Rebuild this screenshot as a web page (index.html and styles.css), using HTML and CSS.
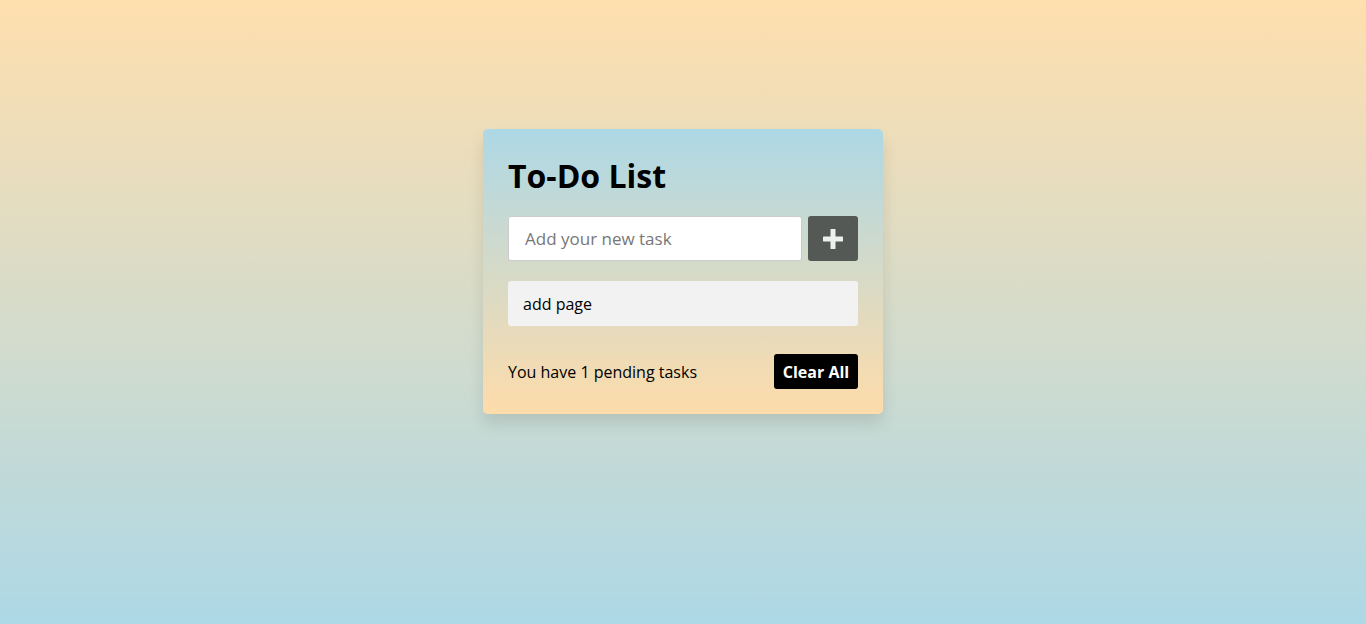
FILE: index.html
```html
<!DOCTYPE html>
<html lang="en">
<head>
<meta charset="utf-8">
<title>To-Do List</title>
<link rel="stylesheet" href="styles.css">
</head>
<body>
  <div class="wrapper">
    <h1 class="title">To-Do List</h1>
    <div class="input-row">
      <input class="task-input" type="text" placeholder="Add your new task">
      <button class="add-btn" aria-label="Add">
        <svg width="20" height="20" viewBox="0 0 20 20"><path d="M10 1v18M1 10h18" stroke="#eef0ee" stroke-width="5" stroke-linecap="round"/></svg>
      </button>
    </div>
    <ul class="todo-list">
      <li class="todo-item">add page</li>
    </ul>
    <div class="footer">
      <span class="pending">You have 1 pending tasks</span>
      <button class="clear-btn">Clear All</button>
    </div>
  </div>
</body>
</html>
```
FILE: styles.css
```css
* { box-sizing: border-box; }
html, body { height: 100%; }
body {
  margin: 0;
  font-family: "Comic Sans MS", "Open Sans", sans-serif;
  background: linear-gradient(to bottom, #ffdfae 0%, #add8e6 100%);
  padding-top: 129px;
}
.wrapper {
  width: 400px;
  margin: 0 auto;
  padding: 25px;
  border-radius: 5px;
  background: linear-gradient(to bottom, #add8e6 0%, #fedcaa 100%);
  box-shadow: 0 10px 15px rgba(0, 0, 0, 0.1);
}
.title {
  margin: 0 0 18px;
  font-size: 32px;
  line-height: 44px;
  font-weight: 700;
  color: #000;
}
.input-row {
  display: flex;
  gap: 6px;
  height: 45px;
}
.task-input {
  flex: 1;
  height: 45px;
  border: 1px solid #ccc;
  border-radius: 3px;
  padding: 0 16px;
  font-family: inherit;
  font-size: 17px;
  outline: none;
  background: #fff;
}
.task-input::placeholder { color: #777; }
.add-btn {
  width: 50px;
  height: 45px;
  border: none;
  border-radius: 3px;
  background: #555955;
  display: flex;
  align-items: center;
  justify-content: center;
  padding: 0;
}
.todo-list {
  list-style: none;
  margin: 20px 0 0;
  padding: 0;
}
.todo-item {
  height: 45px;
  display: flex;
  align-items: center;
  padding: 0 15px;
  background: #f2f2f2;
  border-radius: 3px;
  font-size: 16px;
  color: #000;
}
.footer {
  margin-top: 28px;
  display: flex;
  align-items: center;
  justify-content: space-between;
}
.pending { font-size: 16px; color: #000; }
.clear-btn {
  height: 35px;
  width: 84px;
  border: none;
  border-radius: 3px;
  background: #000;
  color: #fff;
  font-family: inherit;
  font-size: 16px;
  font-weight: 700;
  padding: 0;
}
```
